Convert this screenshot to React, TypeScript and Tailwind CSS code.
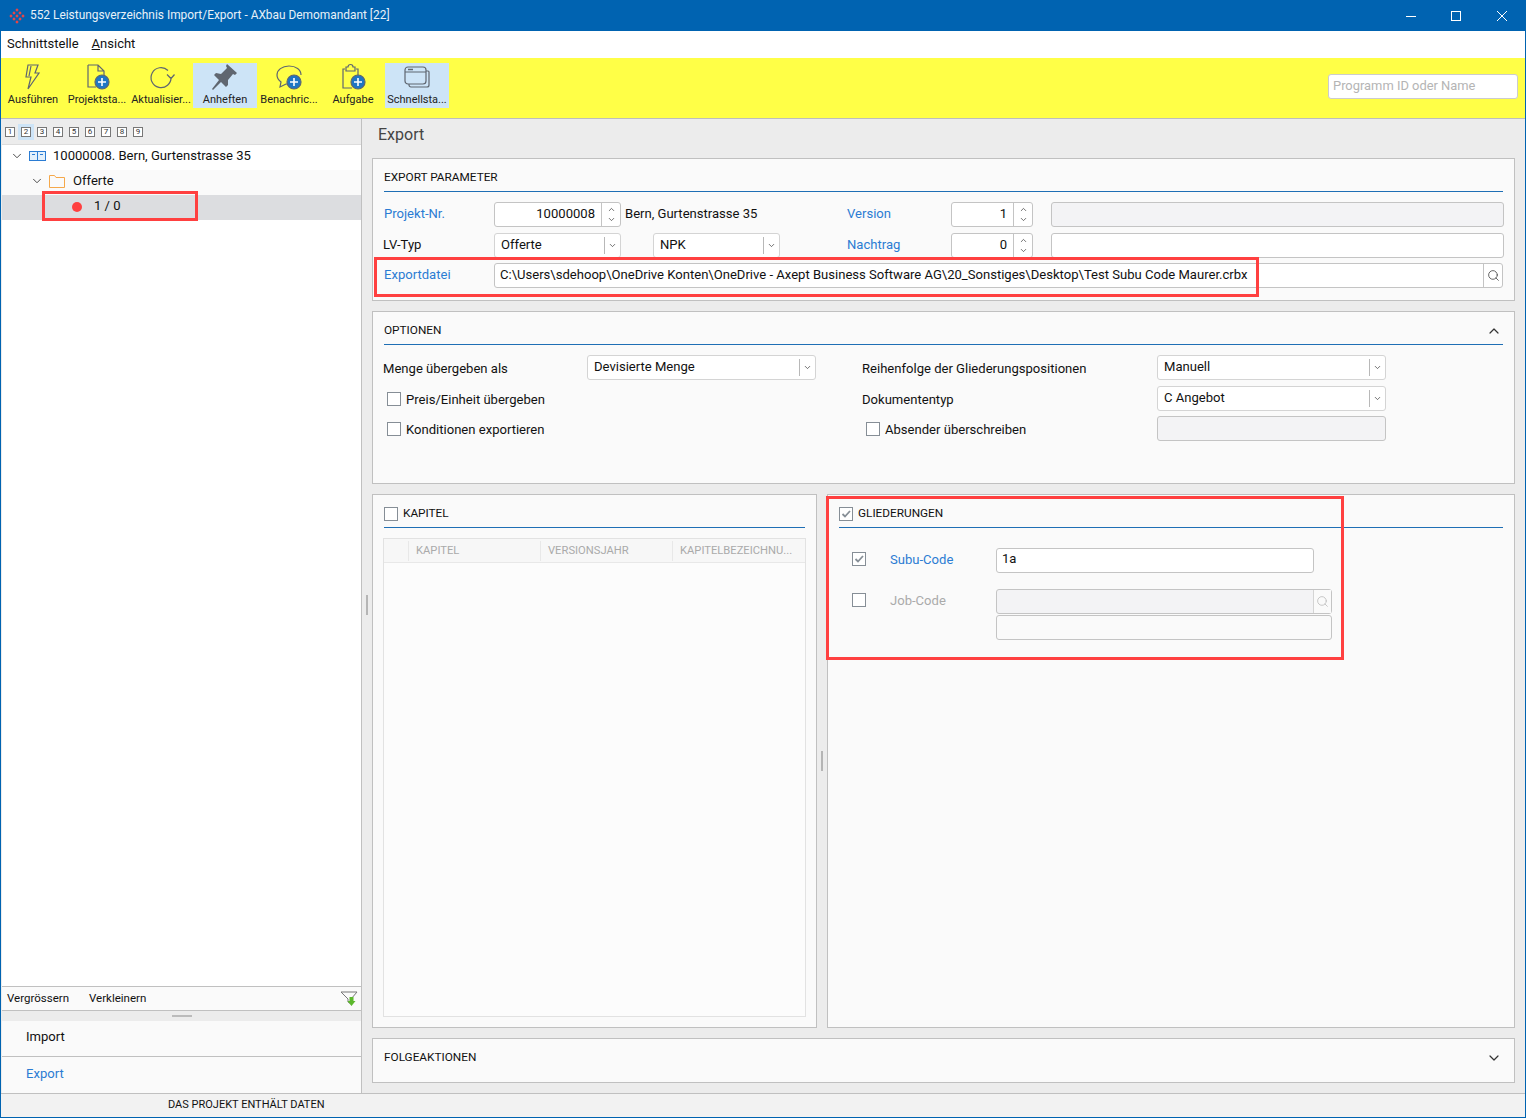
import { ChevronDown, ChevronUp, Search } from 'lucide-react'
import type { ReactNode } from 'react'

const font = "font-['Roboto','Liberation_Sans',sans-serif]"

function ToolIcon({ name }: { name: string }) {
  const badge = (
    <g>
      <circle cx="21" cy="20" r="7" fill="#1f76c4" />
      <path d="M21 16v8M17 20h8" stroke="#fff" strokeWidth="1.6" />
    </g>
  )
  const stroke = '#5f6670'
  return (
    <svg width="32" height="30" viewBox="0 0 32 30" fill="none" stroke={stroke} strokeWidth="1.2">
      {name === 'run' && <path d="M11 3h10l-3 8h4L11 27l3-12h-5l2-12zM14 4l-2 10" />}
      {name === 'doc' && (
        <g>
          <path d="M7 3h10l6 6v5M7 3v22h8M17 3v6h6" />
          {badge}
        </g>
      )}
      {name === 'refresh' && <path d="M23 8.500A10 10 0 1 0 26 15M22 12.500l4 4 3.500-4" />}
      {name === 'pin' && (
        <g fill="#5f6670" stroke="none">
          <path d="M18 2l10 9-2 2-2-1-5 6 0 5-2 2-5-5-8 8-1-1 7-9-5-5 2-2 5 1 6-6-1-2z" />
        </g>
      )}
      {name === 'chat' && (
        <g>
          <path d="M16 4c7 0 12 3.500 12 9M16 4C9 4 4 8 4 13c0 3 2 5.500 4 7l-1 5 6-3h3" />
          {badge}
        </g>
      )}
      {name === 'task' && (
        <g>
          <path d="M8 7H6v19h9M19 7h2v6M9 5h2a2.500 2.500 0 0 1 5 0h2v4H9z" />
          {badge}
        </g>
      )}
      {name === 'windows' && (
        <g>
          <rect x="4" y="5" width="21" height="17" rx="3" />
          <path d="M4 10h21M25 9h2a1 1 0 0 1 1 1v13a2 2 0 0 1-2 2H10a2 2 0 0 1-2-2v-1" />
          <path d="M7 7.500h5" strokeWidth="1.500" />
        </g>
      )}
    </svg>
  )
}

function ToolButton({ icon, label, active }: { icon: string; label: string; active?: boolean }) {
  return (
    <div className={`w-[64px] h-[45px] flex flex-col items-center ${active ? 'bg-[#cde4f7]' : ''}`}>
      <div className="h-[30px] mt-[-1px]">
        <ToolIcon name={icon} />
      </div>
      <span className="text-[11px] leading-[13px] mt-[1px] whitespace-nowrap text-[#222]">{label}</span>
    </div>
  )
}

function Check({ checked, className }: { checked?: boolean; className?: string }) {
  return (
    <span className={`w-[14px] h-[14px] border border-[#868e96] bg-white flex items-center justify-center shrink-0 ${className ?? ''}`}>
      {checked && (
        <svg width="10" height="10" viewBox="0 0 10 10" fill="none" stroke="#868e96" strokeWidth="1.800">
          <path d="M1.500 5l2.500 2.500 5-5.500" />
        </svg>
      )}
    </span>
  )
}

function Input({ w, value, bg = 'bg-white' }: { w: string; value?: string; bg?: string }) {
  return (
    <div className={`${w} ${bg} h-[25px] border border-[#c4c4c4] rounded-[3px] px-[5px] leading-[20px] overflow-hidden whitespace-nowrap`}>
      {value}
    </div>
  )
}

function Spinner({ w, value }: { w: string; value: string }) {
  return (
    <div className={`${w} h-[25px] border border-[#c4c4c4] rounded-[3px] bg-white flex items-center`}>
      <span className="flex-1 text-right pr-[6px] pb-[2px]">{value}</span>
      <span className="w-[19px] h-full border-l border-[#c4c4c4] flex flex-col items-center justify-center text-[#444]">
        <ChevronUp size={9} strokeWidth={2} />
        <ChevronDown size={9} strokeWidth={2} className="mt-[1px]" />
      </span>
    </div>
  )
}

function Select({ w, value, up }: { w: string; value: string; up?: boolean }) {
  return (
    <div className={`${w} h-[25px] border border-[#d4d4d4] rounded-[3px] bg-white flex items-center`}>
      <span className={`flex-1 pl-[6px] ${up ? 'mt-[-1px]' : 'mt-[-2px]'}`}>{value}</span>
      <span className="w-[1px] h-[17px] bg-[#b8b8b8]" />
      <span className="w-[15px] flex justify-center text-[#444]">
        <ChevronDown size={9} strokeWidth={2} />
      </span>
    </div>
  )
}

function Card({ children, className }: { children: ReactNode; className: string }) {
  return <div className={`border border-[#c0c0c0] bg-[#fafafa] ${className}`}>{children}</div>
}

function SectionHead({ children }: { children: ReactNode }) {
  return (
    <div className="h-[33px] mx-[11px] border-b border-[#1f6fb5] flex items-center text-[11.800px] pt-[6px] text-[#111]">
      {children}
    </div>
  )
}

function Overlay({ className }: { className: string }) {
  return <div className={`absolute border-[3px] border-[#ff4040] pointer-events-none ${className}`} />
}

const tools = [
  { icon: 'run', label: 'Ausführen' },
  { icon: 'doc', label: 'Projektsta...' },
  { icon: 'refresh', label: 'Aktualisier...' },
  { icon: 'pin', label: 'Anheften', active: true },
  { icon: 'chat', label: 'Benachric...' },
  { icon: 'task', label: 'Aufgabe' },
  { icon: 'windows', label: 'Schnellsta...', active: true },
]

const logoDots = [
  [8, 2], [5, 5], [11, 5], [2, 8], [8, 8], [14, 8], [5, 11], [11, 11], [8, 14],
]

const blue = 'text-[#2b7cd3]'

export default function App() {
  return (
    <div className={`${font} relative w-[1526px] h-[1118px] overflow-hidden bg-[#ececec] border-x border-b border-[#0063b1] text-[13.070px] text-[#111] flex flex-col`}>
      {/* title bar */}
      <div className="h-[31px] shrink-0 bg-[#0063b1] flex items-center text-white text-[11.900px]">
        <svg width="16" height="16" viewBox="0 0 16 16" className="ml-[8px] mr-[5px]" fill="#ee4444">
          {logoDots.map(([x, y]) => (
            <rect key={`${x}-${y}`} x={x - 1.2} y={y - 1.2} width="2.400" height="2.400" transform={`rotate(45 ${x} ${y})`} />
          ))}
        </svg>
        <span className="text-[#e8f1f8]">552 Leistungsverzeichnis Import/Export - AXbau Demomandant [22]</span>
        <div className="ml-auto flex items-center">
          <svg width="10" height="10" viewBox="0 0 10 10" stroke="#fff" className="mr-[35px]"><path d="M0 5.500h10" /></svg>
          <svg width="10" height="10" viewBox="0 0 10 10" stroke="#fff" fill="none" className="mr-[36px]"><rect x="0.500" y="0.500" width="9" height="9" /></svg>
          <svg width="10" height="10" viewBox="0 0 10 10" stroke="#fff" className="mr-[18px]"><path d="M0 0l10 10M10 0L0 10" /></svg>
        </div>
      </div>

      {/* menu */}
      <div className="h-[27px] shrink-0 bg-white flex items-center pl-[6px] text-[13px] pb-[2px]">
        <span>Schnittstelle</span>
        <span className="ml-[13px]"><u>A</u>nsicht</span>
      </div>

      {/* toolbar */}
      <div className="h-[60px] shrink-0 bg-[#ffff47] flex pt-[5px]">
        {tools.map((t) => (
          <ToolButton key={t.label} icon={t.icon} label={t.label} active={t.active} />
        ))}
        <div className="ml-auto mr-[7px] mt-[11px] w-[190px] h-[25px] bg-white border border-[#ccc] rounded-[3px] px-[4px] leading-[22px] text-[12.900px] text-[#b4b4b4]">
          Programm ID oder Name
        </div>
      </div>

      <div className="flex-1 flex min-h-0 border-t border-[#bdbdbd]">
        {/* left side */}
        <div className="w-[360px] ml-[1px] shrink-0 flex flex-col border-r border-[#c0c0c0]">
          <div className="h-[25px] bg-[#ececec] flex items-center">
            {[1, 2, 3, 4, 5, 6, 7, 8, 9].map((n) => (
              <span key={n} className={`w-[16px] h-[16px] flex items-center justify-center ${n === 2 ? 'bg-[#cde4f7]' : ''}`}>
                <span className="w-[10px] h-[10px] border border-[#777] bg-white text-[8px] leading-[8px] text-center text-[#333]">{n}</span>
              </span>
            ))}
          </div>
          <div className="flex-1 bg-white border-t border-[#dcdcdc]">
            <div className="h-[25px] flex items-center pl-[8px] pb-[3px]">
              <ChevronDown size={14} strokeWidth={1.500} className="text-[#333]" />
              <svg width="18" height="12" viewBox="0 0 18 12" className="ml-[5px]" fill="none" stroke="#2b7cd3">
                <rect x="0.500" y="1.500" width="16" height="9" fill="#e3f0fb" />
                <path d="M8.500 1.500v9M3 4.500h3M11 4.500h3" />
              </svg>
              <span className="ml-[6px]">10000008. Bern, Gurtenstrasse 35</span>
            </div>
            <div className="h-[25px] bg-[#fafafa] flex items-center pl-[28px] pb-[3px]">
              <ChevronDown size={14} strokeWidth={1.500} className="text-[#333]" />
              <svg width="18" height="15" viewBox="0 0 18 15" className="ml-[4px]" fill="none" stroke="#f5a84a">
                <path d="M1.500 1.500h5l1.500 2h8.500v10h-15z" />
              </svg>
              <span className="ml-[7px]">Offerte</span>
            </div>
            <div className="h-[25px] bg-[#dcdde0] flex items-center pl-[70px] pb-[1px]">
              <span className="w-[10px] h-[10px] rounded-full bg-[#ff4040]" />
              <span className="ml-[12px] pb-[2px]">1 / 0</span>
            </div>
          </div>
          <div className="h-[25px] bg-[#fafafa] border-y border-[#c0c0c0] flex items-center pl-[5px] text-[11.500px]">
            <span>Vergrössern</span>
            <span className="ml-[20px]">Verkleinern</span>
            <svg width="18" height="16" viewBox="0 0 18 16" className="ml-auto mr-[3px]" fill="none">
              <path d="M1 1h16l-6 7v5l-3-2V8z" stroke="#777" />
              <path d="M9.500 6h4v4h2l-4 5-4-5h2z" fill="#5cb82c" />
            </svg>
          </div>
          <div className="h-[10px] flex items-center justify-center">
            <span className="w-[20px] h-[2px] bg-[#bbb]" />
          </div>
          <div className="h-[36px] bg-[#fafafa] border-b border-[#c0c0c0] flex items-center pl-[24px] pb-[3px]">Import</div>
          <div className={`h-[36px] bg-[#fafafa] flex items-center pl-[24px] pb-[3px] ${blue}`}>Export</div>
        </div>

        {/* splitter */}
        <div className="w-[10px] shrink-0 flex items-center justify-center">
          <span className="w-[2px] h-[20px] bg-[#b5b5b5] mt-[-2px]" />
        </div>

        {/* right side */}
        <div className="w-[1143px] shrink-0 flex flex-col">
          <div className="h-[39px] shrink-0 flex items-center pl-[6px] pb-[7px] text-[16px] text-[#444]">Export</div>

          <Card className="h-[143px] shrink-0">
            <SectionHead>EXPORT PARAMETER</SectionHead>
            <div className="pl-[11px] pr-[10px] pt-[10px] flex flex-col gap-[6px]">
              <div className="flex items-center h-[25px]">
                <span className={`w-[110px] pb-[2px] ${blue}`}>Projekt-Nr.</span>
                <Spinner w="w-[127px]" value="10000008" />
                <span className="ml-[4px] w-[222px] pb-[2px]">Bern, Gurtenstrasse 35</span>
                <span className={`w-[104px] pb-[2px] ${blue}`}>Version</span>
                <Spinner w="w-[82px]" value="1" />
                <div className="ml-[18px]"><Input w="w-[453px]" bg="bg-[#f3f3f5]" /></div>
              </div>
              <div className="flex items-center h-[25px]">
                <span className="w-[111px] ml-[-1px] pb-[2px]">LV-Typ</span>
                <Select w="w-[127px]" value="Offerte" />
                <div className="ml-[32px]"><Select w="w-[127px]" value="NPK" /></div>
                <span className={`ml-[67px] w-[104px] pb-[2px] ${blue}`}>Nachtrag</span>
                <Spinner w="w-[82px]" value="0" />
                <div className="ml-[18px]"><Input w="w-[453px]" /></div>
              </div>
              <div className="flex items-center h-[25px] mt-[-1px]">
                <span className={`w-[110px] pb-[2px] ${blue}`}>Exportdatei</span>
                <div className="w-[1009px] h-[25px] border border-[#c4c4c4] rounded-[3px] bg-white flex items-center">
                  <span className="flex-1 pl-[5px] pb-[2px] whitespace-nowrap">C:\Users\sdehoop\OneDrive Konten\OneDrive - Axept Business Software AG\20_Sonstiges\Desktop\Test Subu Code Maurer.crbx</span>
                  <span className="w-[19px] h-full border-l border-[#c4c4c4] flex items-center justify-center text-[#444]">
                    <Search size={13} strokeWidth={1.500} />
                  </span>
                </div>
              </div>
            </div>
          </Card>

          <Card className="h-[173px] mt-[10px] shrink-0">
            <SectionHead>
              OPTIONEN
              <ChevronUp size={16} strokeWidth={1.800} className="ml-auto mr-[1px] text-[#333]" />
            </SectionHead>
            <div className="pl-[10px] pt-[10px] flex flex-col gap-[6px]">
              <div className="flex items-center h-[25px]">
                <span className="w-[204px] pt-[2px]">Menge übergeben als</span>
                <Select w="w-[229px]" value="Devisierte Menge" up />
                <span className="ml-[46px] w-[295px] pt-[2px]">Reihenfolge der Gliederungspositionen</span>
                <Select w="w-[229px]" value="Manuell" up />
              </div>
              <div className="flex items-center h-[25px]">
                <div className="w-[479px] flex items-center pl-[4px]">
                  <Check />
                  <span className="ml-[5px] pt-[3px]">Preis/Einheit übergeben</span>
                </div>
                <span className="w-[295px] pt-[2px]">Dokumententyp</span>
                <Select w="w-[229px]" value="C Angebot" up />
              </div>
              <div className="flex items-center h-[25px] mt-[-1px]">
                <div className="w-[479px] flex items-center pl-[4px]">
                  <Check />
                  <span className="ml-[5px] pt-[3px]">Konditionen exportieren</span>
                </div>
                <div className="w-[295px] flex items-center pl-[4px]">
                  <Check />
                  <span className="ml-[5px] pt-[3px]">Absender überschreiben</span>
                </div>
                <Input w="w-[229px]" bg="bg-[#f3f3f5]" />
              </div>
            </div>
          </Card>

          <div className="flex h-[534px] mt-[10px] shrink-0">
            <Card className="w-[445px] h-full">
              <SectionHead>
                <Check />
                <span className="ml-[5px]">KAPITEL</span>
              </SectionHead>
              <div className="ml-[10px] mt-[10px] w-[423px] h-[479px] border border-[#e2e2e2] bg-[#fcfcfc]">
                <div className="h-[24px] bg-[#f7f7f7] border-b border-[#e8e8e8] flex text-[11.200px] text-[#aaa] items-center">
                  <span className="w-[25px] h-[20px] border-r border-[#e8e8e8]" />
                  <span className="w-[132px] h-[20px] pl-[7px] border-r border-[#e8e8e8] leading-[20px]">KAPITEL</span>
                  <span className="w-[132px] h-[20px] pl-[7px] border-r border-[#e8e8e8] leading-[20px]">VERSIONSJAHR</span>
                  <span className="flex-1 pl-[7px] leading-[20px] whitespace-nowrap">KAPITELBEZEICHNU...</span>
                </div>
              </div>
            </Card>

            <div className="w-[10px] flex items-center justify-center">
              <span className="w-[2px] h-[20px] bg-[#b5b5b5]" />
            </div>

            <Card className="w-[688px] h-full">
              <SectionHead>
                <Check checked />
                <span className="ml-[5px]">GLIEDERUNGEN</span>
              </SectionHead>
              <div className="pl-[24px] pt-[20px]">
                <div className="flex items-center h-[25px]">
                  <Check checked className="mt-[-3px]" />
                  <span className={`ml-[24px] w-[106px] pb-[2px] ${blue}`}>Subu-Code</span>
                  <Input w="w-[318px]" value="1a" />
                </div>
                <div className="flex items-center h-[25px] mt-[16px]">
                  <Check className="mt-[-3px]" />
                  <span className="ml-[24px] w-[106px] pb-[2px] text-[#aaa]">Job-Code</span>
                  <div className="w-[336px] h-[25px] border border-[#c4c4c4] rounded-[3px] bg-[#f3f3f5] flex justify-end">
                    <span className="w-[18px] h-full bg-[#fafafa] border-l border-[#d4d4d4] flex items-center justify-center text-[#bbb]">
                      <Search size={13} strokeWidth={1.500} />
                    </span>
                  </div>
                </div>
                <div className="ml-[144px] mt-[1px]">
                  <Input w="w-[336px]" bg="bg-[#fafafa]" />
                </div>
              </div>
            </Card>
          </div>

          <Card className="h-[45px] mt-[10px] shrink-0 px-[11px] pb-[5px] flex items-center text-[11.800px]">
            FOLGEAKTIONEN
            <ChevronDown size={16} strokeWidth={1.800} className="ml-auto mr-[1px] text-[#333]" />
          </Card>
        </div>
      </div>

      {/* status bar */}
      <div className="h-[24px] shrink-0 bg-[#f2f2f2] border-t border-[#c0c0c0] flex items-center pl-[167px] text-[11px]">
        DAS PROJEKT ENTHÄLT DATEN
      </div>

      {/* red highlight boxes from the annotation */}
      <Overlay className="left-[41px] top-[191px] w-[156px] h-[30px]" />
      <Overlay className="left-[373px] top-[257px] w-[885px] h-[40px]" />
      <Overlay className="left-[825px] top-[496px] w-[518px] h-[164px]" />
    </div>
  )
}
